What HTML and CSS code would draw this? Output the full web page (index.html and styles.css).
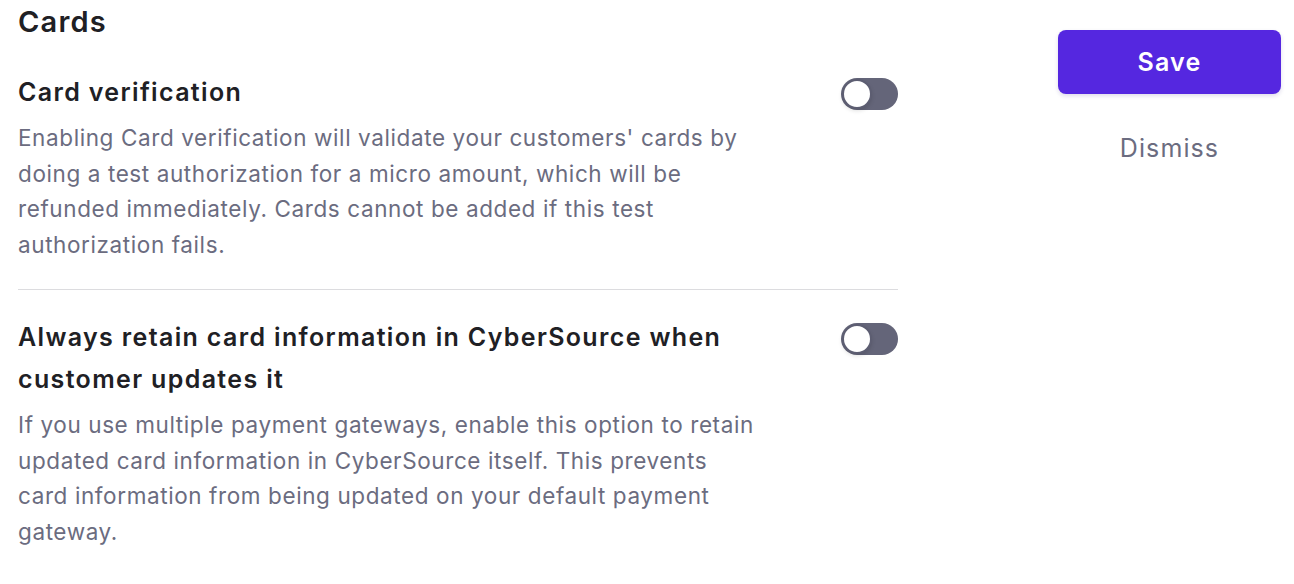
FILE: index.html
```html
<!DOCTYPE html>
<html>
<head>
<meta charset="utf-8">
<link rel="stylesheet" href="styles.css">
</head>
<body>
<div class="page">
  <main class="main">
    <h1 class="title">Cards</h1>
    <section class="setting">
      <div class="setting-row">
        <div class="setting-text">
          <h2 class="setting-heading">Card verification</h2>
          <p class="setting-desc">Enabling Card verification will validate your customers' cards by doing a test authorization for a micro amount, which will be refunded immediately. Cards cannot be added if this test authorization fails.</p>
        </div>
        <span class="toggle"><span class="knob"></span></span>
      </div>
    </section>
    <section class="setting setting-last">
      <div class="setting-row">
        <div class="setting-text">
          <h2 class="setting-heading">Always retain card information in CyberSource when customer updates it</h2>
          <p class="setting-desc">If you use multiple payment gateways, enable this option to retain updated card information in CyberSource itself. This prevents card information from being updated on your default payment gateway.</p>
        </div>
        <span class="toggle"><span class="knob"></span></span>
      </div>
    </section>
  </main>
  <aside class="actions">
    <button class="btn-save">Save</button>
    <button class="btn-dismiss">Dismiss</button>
  </aside>
</div>
</body>
</html>
```

FILE: styles.css
```css
* { box-sizing: border-box; }
html, body { margin: 0; padding: 0; background: #fff; }
body {
  font-family: Inter, "Noto Sans", "Liberation Sans", sans-serif;
  color: #202024;
}
.page {
  display: flex;
  padding: 5px 0 0 18px;
}
.main {
  width: 880px;
}
.title {
  margin: 0;
  font-size: 29px;
  line-height: 34px;
  font-weight: 600;
  letter-spacing: 1.2px;
}
.setting {
  padding: 32px 0 26px;
  border-bottom: 1px solid #dcdcdf;
}
.setting-last {
  border-bottom: none;
  padding-top: 26px;
}
.setting-row {
  display: flex;
  justify-content: space-between;
  align-items: flex-start;
}
.setting-text {
  width: 746px;
}
.setting-heading {
  margin: 0;
  font-size: 25px;
  line-height: 42px;
  font-weight: 600;
  letter-spacing: 1.35px;
  color: #202024;
  width: 720px;
}
.setting-desc {
  margin: 7px 0 0;
  font-size: 22.5px;
  line-height: 35.7px;
  letter-spacing: 0.6px;
  color: #6b6c80;
}
.toggle {
  position: relative;
  display: block;
  width: 57px;
  height: 32px;
  margin-top: 7px;
  border-radius: 16px;
  background: #646579;
  flex: none;
}
.knob {
  position: absolute;
  left: 1px;
  top: 1px;
  width: 30px;
  height: 30px;
  border-radius: 50%;
  background: #fff;
  border: 2px solid #5d5e72;
  box-shadow: 0 2px 4px rgba(0,0,0,0.12);
}
.actions {
  margin-left: 160px;
  width: 223px;
  padding-top: 25px;
  display: flex;
  flex-direction: column;
  align-items: center;
}
.btn-save {
  width: 223px;
  height: 64px;
  border: none;
  border-radius: 8px;
  background: #5527e0;
  color: #fff;
  font-family: inherit;
  font-size: 25px;
  font-weight: 600;
  letter-spacing: 1.2px;
  box-shadow: 0 2px 4px rgba(40,20,120,0.15);
}
.btn-dismiss {
  margin-top: 36px;
  border: none;
  background: none;
  padding: 0;
  font-family: inherit;
  font-size: 25px;
  line-height: 36px;
  letter-spacing: 1.1px;
  color: #6b6c80;
}
```
